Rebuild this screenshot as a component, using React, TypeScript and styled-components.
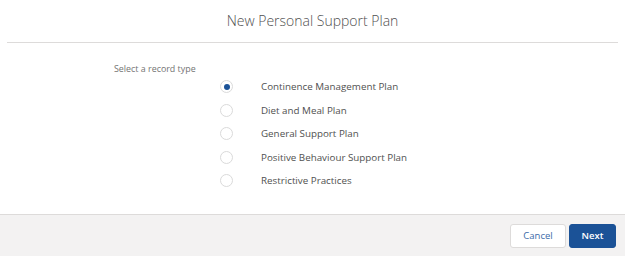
import React, { useState } from 'react';
import styled, { createGlobalStyle } from 'styled-components';

const GlobalStyle = createGlobalStyle`
  html, body {
    margin: 0;
    padding: 0;
    background: #ffffff;
  }
  body {
    font-family: "Open Sans", "Liberation Sans", sans-serif;
  }
`;

const Modal = styled.div`
  width: 625px;
  height: 256px;
  display: flex;
  flex-direction: column;
  background: #ffffff;
`;

const Header = styled.div`
  height: 43px;
  margin: 0 7px;
  border-bottom: 1px solid #dddbda;
  display: flex;
  align-items: center;
  justify-content: center;
  box-sizing: border-box;
`;

const Title = styled.h2`
  margin: 0;
  font-size: 14px;
  font-weight: 300;
  color: #505050;
  padding-bottom: 1px;
`;

const Body = styled.div`
  flex: 1;
  padding: 20px 0 0 114px;
`;

const Legend = styled.div`
  font-size: 8.9px;
  color: #737373;
  line-height: 12px;
`;

const RadioList = styled.div`
  display: flex;
  flex-direction: column;
  margin: 0 0 0 106px;
`;

const RadioRow = styled.label`
  display: flex;
  align-items: center;
  height: 23.5px;
  gap: 28px;
  cursor: pointer;
`;

const RadioCircle = styled.span<{ checked: boolean }>`
  width: 13px;
  height: 13px;
  border: 1px solid #dadada;
  border-radius: 50%;
  box-sizing: border-box;
  display: flex;
  align-items: center;
  justify-content: center;
  background: #ffffff;
  &::after {
    content: '';
    width: 6px;
    height: 6px;
    border-radius: 50%;
    background: ${props => (props.checked ? '#1b5297' : 'transparent')};
  }
`;

const RadioText = styled.span`
  font-size: 9.8px;
  color: #505050;
`;

const Footer = styled.div`
  height: 42px;
  border-top: 1px solid #dddbda;
  background: #f3f2f2;
  box-sizing: border-box;
  display: flex;
  align-items: center;
  justify-content: flex-end;
  gap: 3px;
  padding: 0 9px 0 0;
`;

const Button = styled.button<{ primary?: boolean }>`
  height: 24px;
  padding: 0;
  border-radius: 3px;
  font-family: "Open Sans", "Liberation Sans", sans-serif;
  font-size: 9.5px;
  cursor: pointer;
  ${props => props.primary ? `
    background: #1b5297;
    border: 1px solid #1b5297;
    color: #ffffff;
    font-weight: 600;
    width: 47px;
  ` : `
    background: #ffffff;
    border: 1px solid #dddbda;
    color: #3b6ba8;
    font-weight: 400;
    width: 56px;
  `}
`;

const recordTypes = [
  'Continence Management Plan',
  'Diet and Meal Plan',
  'General Support Plan',
  'Positive Behaviour Support Plan',
  'Restrictive Practices',
];

const App: React.FC = () => {
  const [selected, setSelected] = useState(0);

  return (
    <>
      <GlobalStyle />
      <Modal>
        <Header>
          <Title>New Personal Support Plan</Title>
        </Header>
        <Body>
          <Legend>Select a record type</Legend>
          <RadioList>
            {recordTypes.map((type, index) => (
              <RadioRow key={type} onClick={() => setSelected(index)}>
                <RadioCircle checked={selected === index} />
                <RadioText>{type}</RadioText>
              </RadioRow>
            ))}
          </RadioList>
        </Body>
        <Footer>
          <Button>Cancel</Button>
          <Button primary>Next</Button>
        </Footer>
      </Modal>
    </>
  );
};

export default App;
